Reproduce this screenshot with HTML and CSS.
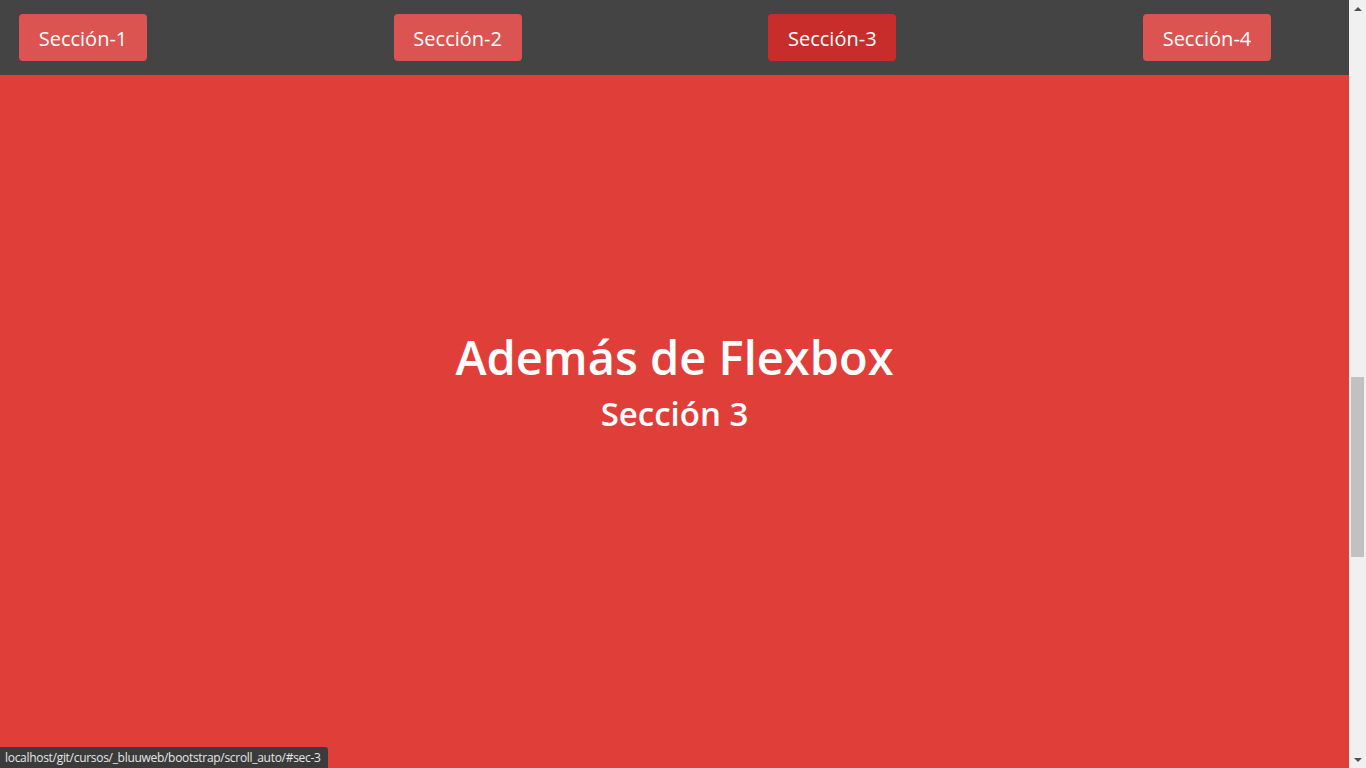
FILE: index.html
```html
<!DOCTYPE html>
<html lang="es">
<head>
<meta charset="utf-8">
<title>Scroll auto</title>
<link rel="stylesheet" href="styles.css">
</head>
<body>
<div class="page">
  <main class="main">
    <nav class="nav">
      <a class="btn" href="#sec-1">Sección-1</a>
      <a class="btn" href="#sec-2">Sección-2</a>
      <a class="btn active" href="#sec-3">Sección-3</a>
      <a class="btn" href="#sec-4">Sección-4</a>
    </nav>
    <section class="section" id="sec-3">
      <h1 class="title">Además de Flexbox</h1>
      <h2 class="subtitle">Sección 3</h2>
    </section>
    <div class="status">localhost/git/cursos/_bluuweb/bootstrap/scroll_auto/#sec-3</div>
  </main>
  <div class="scrollbar">
    <div class="arrow up"></div>
    <div class="track">
      <div class="thumb"></div>
    </div>
    <div class="arrow down"></div>
  </div>
</div>
</body>
</html>
```

FILE: styles.css
```css
* { box-sizing: border-box; }
html, body { margin: 0; padding: 0; height: 100%; overflow: hidden; }
body { font-family: "Open Sans", "Noto Sans", "Liberation Sans", sans-serif; color: #fff; }

.page { display: flex; height: 768px; }
.main { flex: 1; position: relative; background: #e03e38; }

.nav {
  position: absolute; top: 0; left: 0; right: 0;
  height: 75px;
  background: #444444;
  display: flex;
  align-items: flex-start;
  padding: 14px 19px 0;
  gap: 246.67px;
}
.btn {
  display: flex; align-items: center; justify-content: center;
  width: 128px; height: 47px;
  padding-top: 1px;
  border-radius: 4px;
  background: #dc5451;
  color: #fff;
  text-decoration: none;
  font-size: 20px;
}
.btn.active { background: #c82d2b; }

.section {
  height: 768px;
  display: flex; flex-direction: column; align-items: center; justify-content: center;
  padding-bottom: 7px;
}
.title {
  margin: 0 0 6px;
  font-size: 47px;
  font-weight: 600;
  line-height: 61px;
}
.subtitle {
  margin: 0;
  font-size: 33px;
  font-weight: 600;
  line-height: 40px;
}

.status {
  position: absolute; left: 0; bottom: 0;
  height: 21px;
  padding: 0 7px 0 5px;
  background: #3b3b3b;
  border-top-right-radius: 3px;
  color: #e6e6e6;
  font-size: 12px;
  line-height: 21px;
  letter-spacing: -0.3px;
}

.scrollbar {
  width: 17px; background: #f0f0f0;
  display: flex; flex-direction: column;
}
.arrow { height: 17px; display: flex; align-items: center; justify-content: center; }
.arrow::before {
  content: ""; width: 0; height: 0;
  border-left: 4px solid transparent; border-right: 4px solid transparent;
}
.arrow.up::before { border-bottom: 4px solid #505050; }
.arrow.down::before { border-top: 4px solid #505050; }
.track { flex: 1; padding: 360px 2px 0; }
.thumb { height: 180px; background: #c1c1c1; }
```
